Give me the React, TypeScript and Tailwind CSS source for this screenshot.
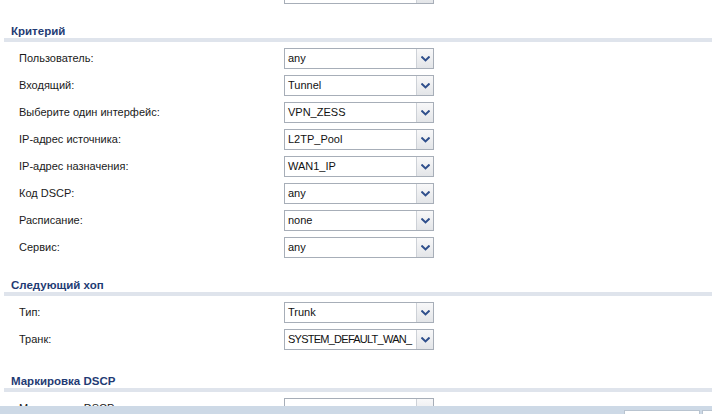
import React from 'react'

const FONT = { fontFamily: '"Liberation Sans", Arial, sans-serif' }

function Chevron() {
  return (
    <svg width="9" height="6" viewBox="0 0 9 6" fill="none">
      <path d="M1.2 1.2 L4.5 4.4 L7.8 1.2" stroke="#2f4f8c" strokeWidth="2" strokeLinecap="square" />
    </svg>
  )
}

function Select({ value, tight = false }: { value: string; tight?: boolean }) {
  return (
    <div className="flex h-[21px] w-[150px] border border-[#a7aeb8] bg-white">
      <div
        className={`flex-1 min-w-0 overflow-hidden whitespace-nowrap pl-[3px] text-[11px] leading-[19px] text-[#111] ${tight ? 'tracking-[-0.75px]' : ''}`}
      >
        {value}
      </div>
      <div className="flex w-[17px] flex-shrink-0 items-center justify-center border-l border-[#cdd1d7] bg-gradient-to-b from-[#f8f8f9] to-[#e3e5e8]">
        <Chevron />
      </div>
    </div>
  )
}

function Row({ label, value, tight }: { label: string; value: string; tight?: boolean }) {
  return (
    <div className="flex h-[27px] items-center pl-[19px]">
      <div className="w-[265px] text-[11px] text-[#1a1a1a]">{label}</div>
      <Select value={value} tight={tight} />
    </div>
  )
}

function Header({ title, className = '' }: { title: string; className?: string }) {
  return (
    <div className={`ml-[4px] ${className}`}>
      <div className="h-[14px] pl-[7px] text-[11.5px] font-bold leading-[14px] text-[#1f3b74]">{title}</div>
      <div className="h-[4px] bg-[#dfe4ec]" />
    </div>
  )
}

const criteria = [
  ['Пользователь:', 'any'],
  ['Входящий:', 'Tunnel'],
  ['Выберите один интерфейс:', 'VPN_ZESS'],
  ['IP-адрес источника:', 'L2TP_Pool'],
  ['IP-адрес назначения:', 'WAN1_IP'],
  ['Код DSCP:', 'any'],
  ['Расписание:', 'none'],
  ['Сервис:', 'any'],
]

export default function App() {
  return (
    <div className="relative h-[414px] w-full overflow-hidden bg-white" style={FONT}>
      {/* tail of the row above */}
      <div className="mt-[-20px]">
        <Row label="" value="" />
      </div>

      <Header title="Критерий" className="mt-[17px]" />
      <div className="mt-[3px]">
        {criteria.map(([l, v]) => (
          <Row key={l} label={l} value={v} />
        ))}
      </div>

      <Header title="Следующий хоп" className="mt-[17px]" />
      <div className="mt-[3px]">
        <Row label="Тип:" value="Trunk" />
        <Row label="Транк:" value="SYSTEM_DEFAULT_WAN_" tight />
      </div>

      <Header title="Маркировка DSCP" className="mt-[21px]" />
      <div className="mt-[3px]">
        <Row label="Маркировка DSCP:" value="" />
      </div>

      {/* footer bar over content */}
      <div className="absolute bottom-0 left-0 right-0 flex h-[8px] items-end justify-end gap-[2px] bg-[#cdd9e6]">
        <div className="h-[4px] w-[76px] border border-b-0 border-[#b9c4d0] bg-white" />
        <div className="mr-[-4px] h-[4px] w-[14px] border border-b-0 border-[#b9c4d0] bg-white" />
      </div>
    </div>
  )
}
